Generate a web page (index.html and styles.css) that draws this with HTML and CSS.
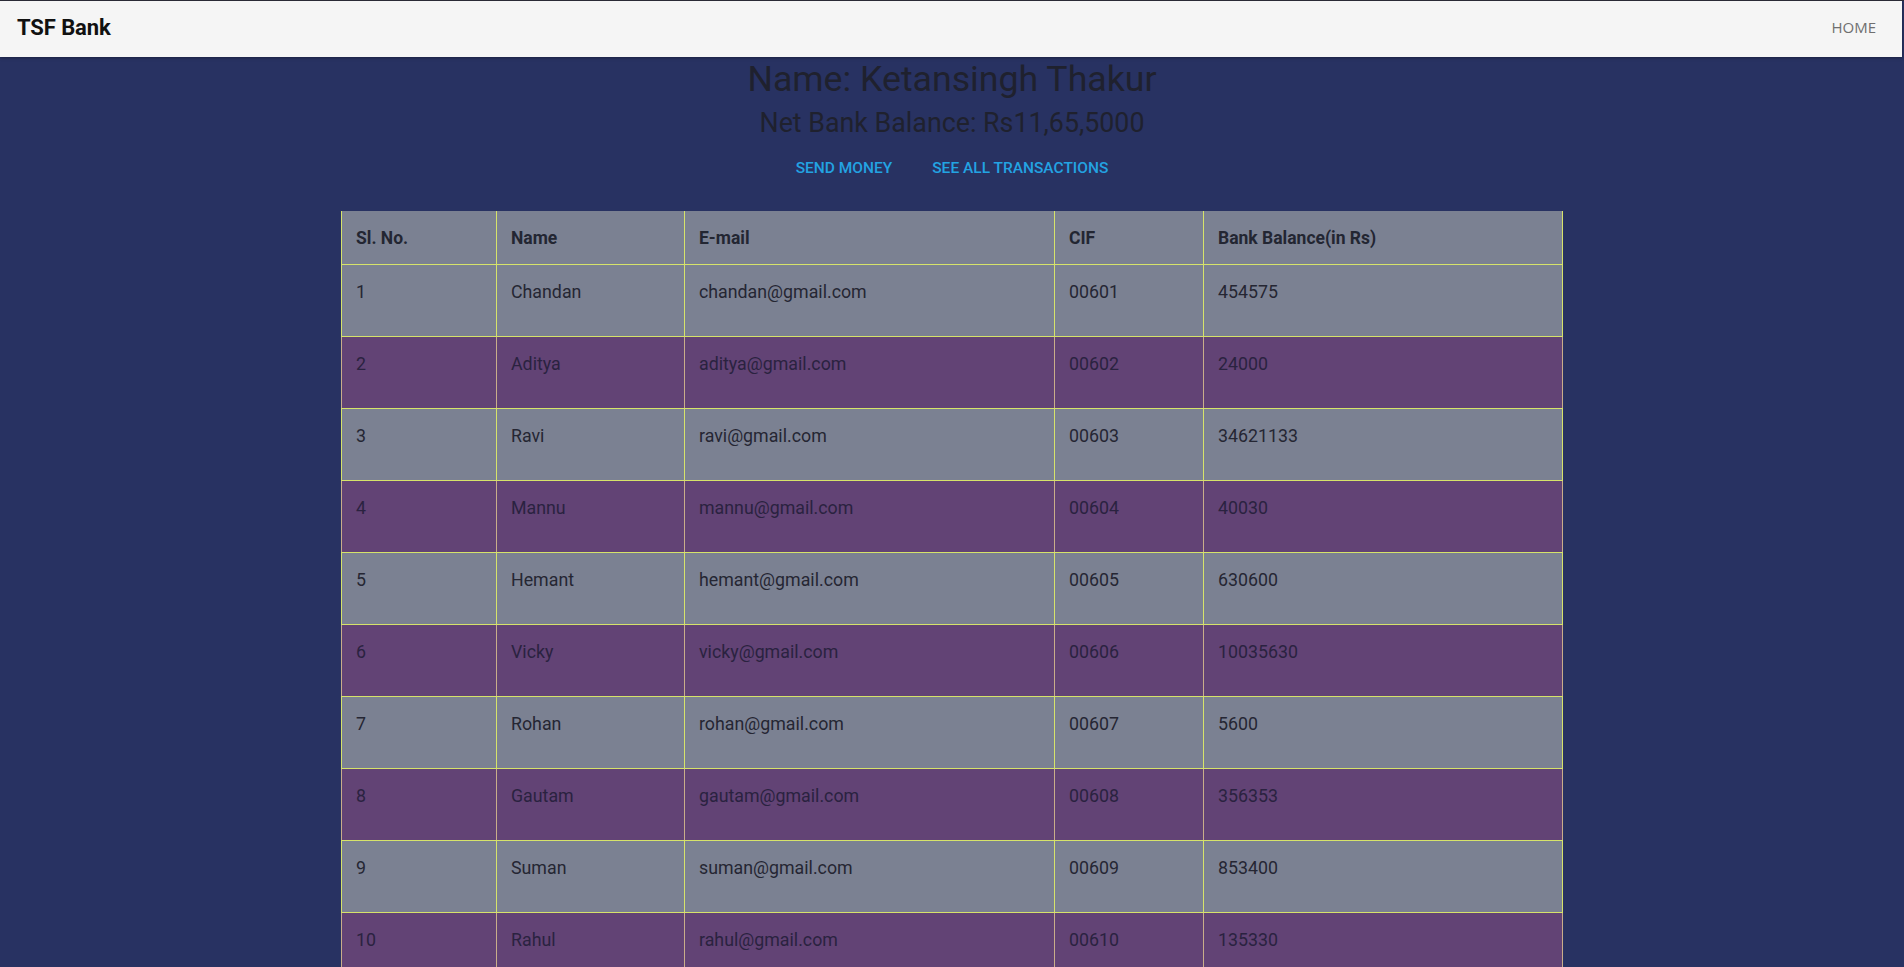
FILE: index.html
```html
<!DOCTYPE html>
<html>
<head>
<meta charset="utf-8">
<title>TSF Bank</title>
<link rel="stylesheet" href="styles.css">
</head>
<body>
<nav class="navbar">
  <a class="brand" href="#">TSF Bank</a>
  <a class="nav-link" href="#">HOME</a>
</nav>
<main class="content">
  <h1 class="title">Name: Ketansingh Thakur</h1>
  <h2 class="subtitle">Net Bank Balance: Rs11,65,5000</h2>
  <div class="actions">
    <a class="action" href="#">SEND MONEY</a>
    <a class="action" href="#">SEE ALL TRANSACTIONS</a>
  </div>
  <table class="customers">
    <colgroup>
      <col class="c1"><col class="c2"><col class="c3"><col class="c4"><col class="c5">
    </colgroup>
    <thead>
      <tr><th>Sl. No.</th><th>Name</th><th>E-mail</th><th>CIF</th><th>Bank Balance(in Rs)</th></tr>
    </thead>
    <tbody>
      <tr><td>1</td><td>Chandan</td><td>chandan@gmail.com</td><td>00601</td><td>454575</td></tr>
      <tr><td>2</td><td>Aditya</td><td>aditya@gmail.com</td><td>00602</td><td>24000</td></tr>
      <tr><td>3</td><td>Ravi</td><td>ravi@gmail.com</td><td>00603</td><td>34621133</td></tr>
      <tr><td>4</td><td>Mannu</td><td>mannu@gmail.com</td><td>00604</td><td>40030</td></tr>
      <tr><td>5</td><td>Hemant</td><td>hemant@gmail.com</td><td>00605</td><td>630600</td></tr>
      <tr><td>6</td><td>Vicky</td><td>vicky@gmail.com</td><td>00606</td><td>10035630</td></tr>
      <tr><td>7</td><td>Rohan</td><td>rohan@gmail.com</td><td>00607</td><td>5600</td></tr>
      <tr><td>8</td><td>Gautam</td><td>gautam@gmail.com</td><td>00608</td><td>356353</td></tr>
      <tr><td>9</td><td>Suman</td><td>suman@gmail.com</td><td>00609</td><td>853400</td></tr>
      <tr><td>10</td><td>Rahul</td><td>rahul@gmail.com</td><td>00610</td><td>135330</td></tr>
    </tbody>
  </table>
</main>
</body>
</html>
```
FILE: styles.css
```css
* { box-sizing: border-box; }
html, body { margin: 0; padding: 0; }
body {
  background: #283262;
  font-family: Roboto, "Liberation Sans", sans-serif;
  color: #212529;
  border-top: 1px solid #2a2a36;
  min-height: 967px;
}
.navbar {
  height: 56px;
  background: #f5f5f5;
  display: flex;
  align-items: center;
  justify-content: space-between;
  padding: 0 26px 4px 17px;
  box-shadow: 0 1px 3px rgba(0,0,0,0.35);
  margin-right: 2px;
}
.brand {
  font-size: 22px;
  font-weight: 700;
  color: #111;
  text-decoration: none;
  letter-spacing: -0.1px;
}
.nav-link {
  font-family: "Open Sans", sans-serif;
  font-size: 15px;
  color: #6f6f6f;
  text-decoration: none;
}
.content {
  display: flex;
  flex-direction: column;
  align-items: center;
}
.title {
  margin: 0;
  font-size: 35.7px;
  font-weight: 400;
  line-height: 44px;
  color: #1f212e;
}
.subtitle {
  margin: 5px 0 0;
  font-size: 26.8px;
  font-weight: 400;
  line-height: 34px;
  color: #1f212e;
}
.actions {
  display: flex;
  gap: 40px;
  margin-top: 18px;
}
.action {
  font-size: 15.5px;
  font-weight: 500;
  color: #23a3e2;
  text-decoration: none;
  line-height: 20px;
}
.customers {
  margin-top: 33px;
  width: 1221px;
  border-collapse: collapse;
  table-layout: fixed;
}
.c1 { width: 155px; }
.c2 { width: 188px; }
.c3 { width: 370px; }
.c4 { width: 149px; }
.c5 { width: 359px; }
.customers th, .customers td {
  text-align: left;
  padding: 15px 15px 15px 14px;
  line-height: 24px;
  border: 1px solid #d6e36a;
}
.customers th {
  font-size: 17.5px;
  font-weight: 700;
  padding-bottom: 14px;
  border-top: none;
  background: #7b8192;
  color: #232632;
}
.customers td {
  font-size: 17.8px;
  padding-bottom: 32px;
  color: #252633;
}
.customers tbody tr:nth-child(odd) td { background: #7b8192; }
.customers tbody tr:nth-child(even) td {
  background: #624375;
  color: #2a2240;
  border-left-color: #c9ae8a;
  border-right-color: #c9ae8a;
}
```
